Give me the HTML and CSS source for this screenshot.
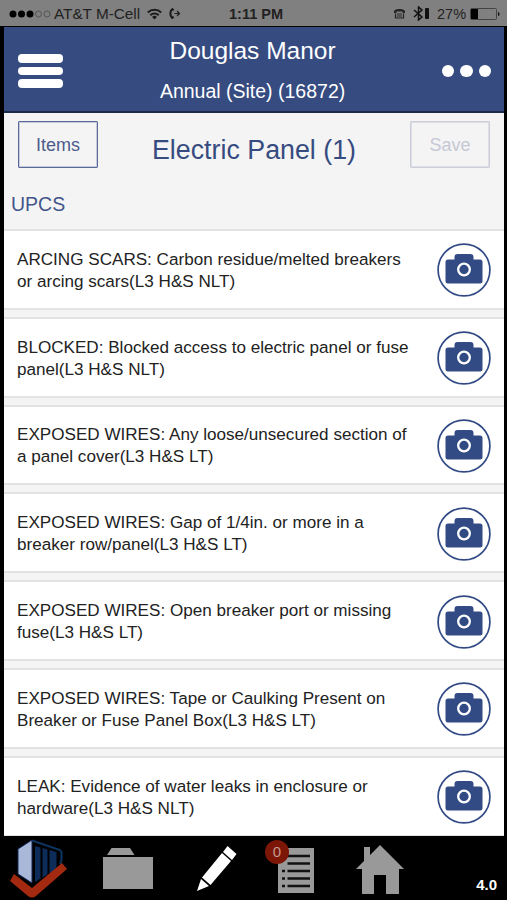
FILE: index.html
```html
<!DOCTYPE html>
<html lang="en">
<head>
    <meta charset="UTF-8">
    <meta name="viewport" content="width=device-width, initial-scale=1.0">
    <title>Douglas Manor</title>
    <link rel="stylesheet" href="styles.css">
</head>
<body>
    <svg class="defs" width="0" height="0">
        <symbol id="camera" viewBox="0 0 54 54">
            <circle cx="27" cy="27" r="25.9" fill="none" stroke="#334b85" stroke-width="1.700"/>
            <path d="M11 16.500h6.500v-2.500a3 3 0 0 1 3-3h13a3 3 0 0 1 3 3v2.500h6.500a2.500 2.500 0 0 1 2.500 2.500v19a2.500 2.500 0 0 1-2.500 2.500h-32a2.500 2.500 0 0 1-2.500-2.500v-19a2.500 2.500 0 0 1 2.500-2.500z" fill="#334b85"/>
            <circle cx="27" cy="26.500" r="5.800" fill="none" stroke="#fff" stroke-width="2.300"/>
        </symbol>
    </svg>
    <div class="status-bar">
        <svg class="signal" width="42" height="10" viewBox="0 0 42 10">
            <g fill="#000"><circle cx="4" cy="5" r="3.500"/><circle cx="12.500" cy="5" r="3.500"/><circle cx="21" cy="5" r="3.500"/></g>
            <g fill="none" stroke="#555" stroke-width="1"><circle cx="29.500" cy="5" r="3"/><circle cx="38" cy="5" r="3"/></g>
        </svg>
        <span class="carrier">AT&amp;T M-Cell</span>
        <svg class="wifi" width="15" height="12" viewBox="0 0 15 12">
            <g fill="none" stroke="#1c1c1c" stroke-width="2"><path d="M.8 4.500a9.500 9.500 0 0 1 13.400 0"/><path d="M3.300 7.200a6 6 0 0 1 8.400 0"/></g>
            <path d="M7.500 11.500L5 9a3.500 3.500 0 0 1 5 0z" fill="#1c1c1c"/>
        </svg>
        <svg class="forward" width="12" height="13" viewBox="0 0 12 13">
            <path d="M4 1.500C.5 4 .5 9 4 11.500M3 1.500l1.500 2M3 11.500l1.500-2" fill="none" stroke="#1c1c1c" stroke-width="2"/>
            <path d="M5.500 6.500h5M8 4l2.500 2.500L8 9" fill="none" stroke="#1c1c1c" stroke-width="1.200"/>
        </svg>
        <span class="time">1:11 PM</span>
        <svg class="tty" width="13" height="11" viewBox="0 0 13 11">
            <path d="M1 5V3.500C1 0 12 0 12 3.500V5H9.500V3.500h-6V5z" fill="#222"/>
            <path d="M2.500 5.500v4.500h8V5.500M4 6h5M4 8h5" fill="none" stroke="#222" stroke-width="1.200"/>
        </svg>
        <svg class="bluetooth" width="17" height="15" viewBox="0 0 17 15">
            <path d="M1 4l8 7-3.500 3V1L9 4l-8 7" fill="none" stroke="#111" stroke-width="1.500"/>
            <rect x="12" y="2" width="4" height="11" rx="1" fill="#111"/>
        </svg>
        <span class="percent">27%</span>
        <svg class="battery" width="30" height="12" viewBox="0 0 30 12">
            <rect x=".5" y=".5" width="26" height="11" rx="1" fill="none" stroke="#444"/>
            <rect x="1" y="1" width="7" height="10" fill="#000"/>
            <path d="M28 4c2 0 2 4 0 4z" fill="#111"/>
        </svg>
    </div>
    <div class="screen">
        <header>
            <div class="menu-btn"><span></span><span></span><span></span></div>
            <div class="titles">
                <h1>Douglas Manor</h1>
                <p>Annual (Site) (16872)</p>
            </div>
            <div class="more-btn"><span></span><span></span><span></span></div>
        </header>
        <div class="toolbar">
            <button>Items</button>
            <h2>Electric Panel (1)</h2>
            <button disabled>Save</button>
        </div>
        <div class="section">UPCS</div>
        <div class="list">
            <div class="item">
                <p>ARCING SCARS: Carbon residue/melted breakers<br>or arcing scars(L3 H&amp;S NLT)</p>
                <svg class="camera"><use href="#camera"/></svg>
            </div>
            <div class="item">
                <p>BLOCKED: Blocked access to electric panel or fuse<br>panel(L3 H&amp;S NLT)</p>
                <svg class="camera"><use href="#camera"/></svg>
            </div>
            <div class="item">
                <p>EXPOSED WIRES: Any loose/unsecured section of<br>a panel cover(L3 H&amp;S LT)</p>
                <svg class="camera"><use href="#camera"/></svg>
            </div>
            <div class="item">
                <p>EXPOSED WIRES: Gap of 1/4in. or more in a<br>breaker row/panel(L3 H&amp;S LT)</p>
                <svg class="camera"><use href="#camera"/></svg>
            </div>
            <div class="item">
                <p>EXPOSED WIRES: Open breaker port or missing<br>fuse(L3 H&amp;S LT)</p>
                <svg class="camera"><use href="#camera"/></svg>
            </div>
            <div class="item">
                <p>EXPOSED WIRES: Tape or Caulking Present on<br>Breaker or Fuse Panel Box(L3 H&amp;S LT)</p>
                <svg class="camera"><use href="#camera"/></svg>
            </div>
            <div class="item">
                <p>LEAK: Evidence of water leaks in enclosure or<br>hardware(L3 H&amp;S NLT)</p>
                <svg class="camera"><use href="#camera"/></svg>
            </div>
        </div>
    </div>
    <footer>
        <svg class="logo" width="58" height="60" viewBox="0 0 58 60">
            <path d="M8 10L22 1l28 9 2 2v9l-2 7-28 19L8 36z" fill="#000"/>
            <path d="M8 10L22 1v43L8 35z" fill="#a9b8d9" stroke="#17275a" stroke-width="1"/>
            <path d="M22 1.500l28 9.500 1.500 2v8l-1.500 4" fill="none" stroke="#0d3562" stroke-width="2"/>
            <path d="M25 7l5.500 1.500v31L25 43zM32.500 9l5 1.500v25l-5 3zM39.500 11l7 2v17l-7 4.500z" fill="#0d2c59"/>
            <path d="M4 35l18 14 30-25 5 6-31 27q-4 3-8 0L0 42z" fill="#a32a10"/>
        </svg>
        <svg class="folder" width="50" height="42" viewBox="0 0 50 42">
            <path d="M8.500 0h18.500l4.500 7H4z M0 9h50v32H0z" fill="#999"/>
        </svg>
        <svg class="pencil" width="40" height="46" viewBox="0 0 40 46">
            <path d="M30.500 0l9 8-4.500 6-9-8zM25 7l9 8-20.500 24-8.500-7.500zM4 33l8 7-12 5z" fill="#fff"/>
        </svg>
        <div class="notes">
            <svg width="36" height="45" viewBox="0 0 36 45">
                <path d="M0 0h36v45H0z" fill="#999"/>
                <path d="M9.500 8h22.500M9.500 15.500h22.500M9.500 23h22.500M9.500 30.500h22.500M9.500 38h22.500M4 23h3M4 30.500h3M4 38h3" stroke="#111" stroke-width="2.500"/>
            </svg>
            <span class="badge">0</span>
        </div>
        <svg class="home" width="48" height="49" viewBox="0 0 48 49">
            <path d="M24 0l24 24h-5v25H30V30H18v19H6V24H0l8-8V2h6v8z" fill="#999"/>
        </svg>
        <span class="version">4.0</span>
    </footer>
</body>
</html>
```

FILE: styles.css
```css
body {
    font-family: "Liberation Sans", Arial, sans-serif;
    background-color: #000;
    margin: 0;
    width: 507px;
    height: 900px;
    overflow: hidden;
}
h1, h2, p {
    margin: 0;
    font-weight: normal;
    white-space: nowrap;
}
svg {
    display: block;
    flex-shrink: 0;
}
.defs {
    display: none;
}
.status-bar {
    display: flex;
    align-items: center;
    height: 26px;
    padding: 1px 7px 0 9px;
    box-sizing: border-box;
    background-color: #808080;
    color: #222;
    font-size: 15px;
    white-space: nowrap;
}
.carrier {
    width: 86px;
    margin-left: 3px;
    font-size: 15.3px;
}
.wifi {
    margin-left: 7px;
}
.forward {
    margin-left: 7px;
}
.time {
    width: 54px;
    margin-left: 48px;
    font-weight: bold;
    font-size: 14.5px;
}
.tty {
    margin-left: 110px;
}
.bluetooth {
    margin-left: 7px;
}
.percent {
    width: 28px;
    margin-left: 7px;
    font-size: 14.5px;
}
.battery {
    margin-left: auto;
}
.screen {
    height: 809px;
    margin: 1px 3px 0 4px;
    background-color: #f4f4f4;
    overflow: hidden;
}
header {
    display: flex;
    justify-content: space-between;
    height: 84px;
    padding: 0 13px 0 14px;
    background-color: #364b80;
    border-bottom: 2px solid #1b2a4a;
    color: #fff;
}
.menu-btn {
    display: flex;
    flex-direction: column;
    gap: 4px;
    width: 49px;
    padding-top: 27px;
}
.menu-btn span {
    width: 45px;
    height: 8.5px;
    border-radius: 4px;
    background-color: #fff;
}
.titles {
    margin-left: -4px;
    text-align: center;
}
.titles h1 {
    margin-top: 9px;
    font-size: 24.5px;
    line-height: 30px;
}
.titles p {
    margin-top: 13px;
    font-size: 19.5px;
    line-height: 24px;
}
.more-btn {
    display: flex;
    gap: 6px;
    padding-top: 38px;
}
.more-btn span {
    width: 12.3px;
    height: 12.3px;
    border-radius: 50%;
    background-color: #fff;
}
.toolbar {
    display: flex;
    justify-content: space-between;
    height: 68px;
    padding: 8px 14px 0;
    box-sizing: border-box;
    color: #364b80;
}
.toolbar button {
    width: 80px;
    height: 47px;
    padding: 2px 0 0;
    border: 1px solid #5a6a9b;
    outline: 1px solid rgba(90, 106, 155, 0.3);
    outline-offset: -2px;
    border-radius: 1px;
    background: none;
    color: #4c5b8c;
    font-family: inherit;
    font-size: 18px;
}
.toolbar button:disabled {
    border-color: #ccced9;
    outline-color: #dddee6;
    color: #c6c8d5;
}
.toolbar h2 {
    margin-top: 13px;
    font-size: 26.8px;
    line-height: 32px;
}
.section {
    height: 48px;
    padding-left: 7px;
    color: #44558a;
    font-size: 19.5px;
    line-height: 47px;
}
.list {
    display: flex;
    flex-direction: column;
    gap: 7px;
}
.item {
    display: flex;
    justify-content: space-between;
    align-items: center;
    height: 80.8px;
    padding: 2px 13.5px 0 13px;
    box-sizing: border-box;
    flex-shrink: 0;
    border: solid #e3e3e3;
    border-width: 2px 0;
    background-color: #fff;
    color: #222;
    font-size: 17.1px;
    line-height: 22px;
}
.item p {
    padding-top: 1px;
}
.camera {
    width: 54px;
    height: 54px;
}
footer {
    display: flex;
    align-items: flex-start;
    height: 64px;
    color: #fff;
}
.logo {
    margin: 3px 0 0 10px;
}
.folder {
    margin: 12px 0 0 35px;
}
.pencil {
    margin: 10px 0 0 44px;
}
.notes {
    position: relative;
    margin: 12px 0 0 41px;
}
.badge {
    position: absolute;
    top: -8px;
    left: -13px;
    width: 24px;
    height: 24px;
    border-radius: 50%;
    background-color: #7c1607;
    color: #c69a92;
    font-size: 15px;
    line-height: 24px;
    text-align: center;
}
.home {
    margin: 9px 0 0 42px;
}
.version {
    margin: 40px 10px 0 auto;
    font-size: 15px;
    line-height: 17px;
    font-weight: bold;
}
```
